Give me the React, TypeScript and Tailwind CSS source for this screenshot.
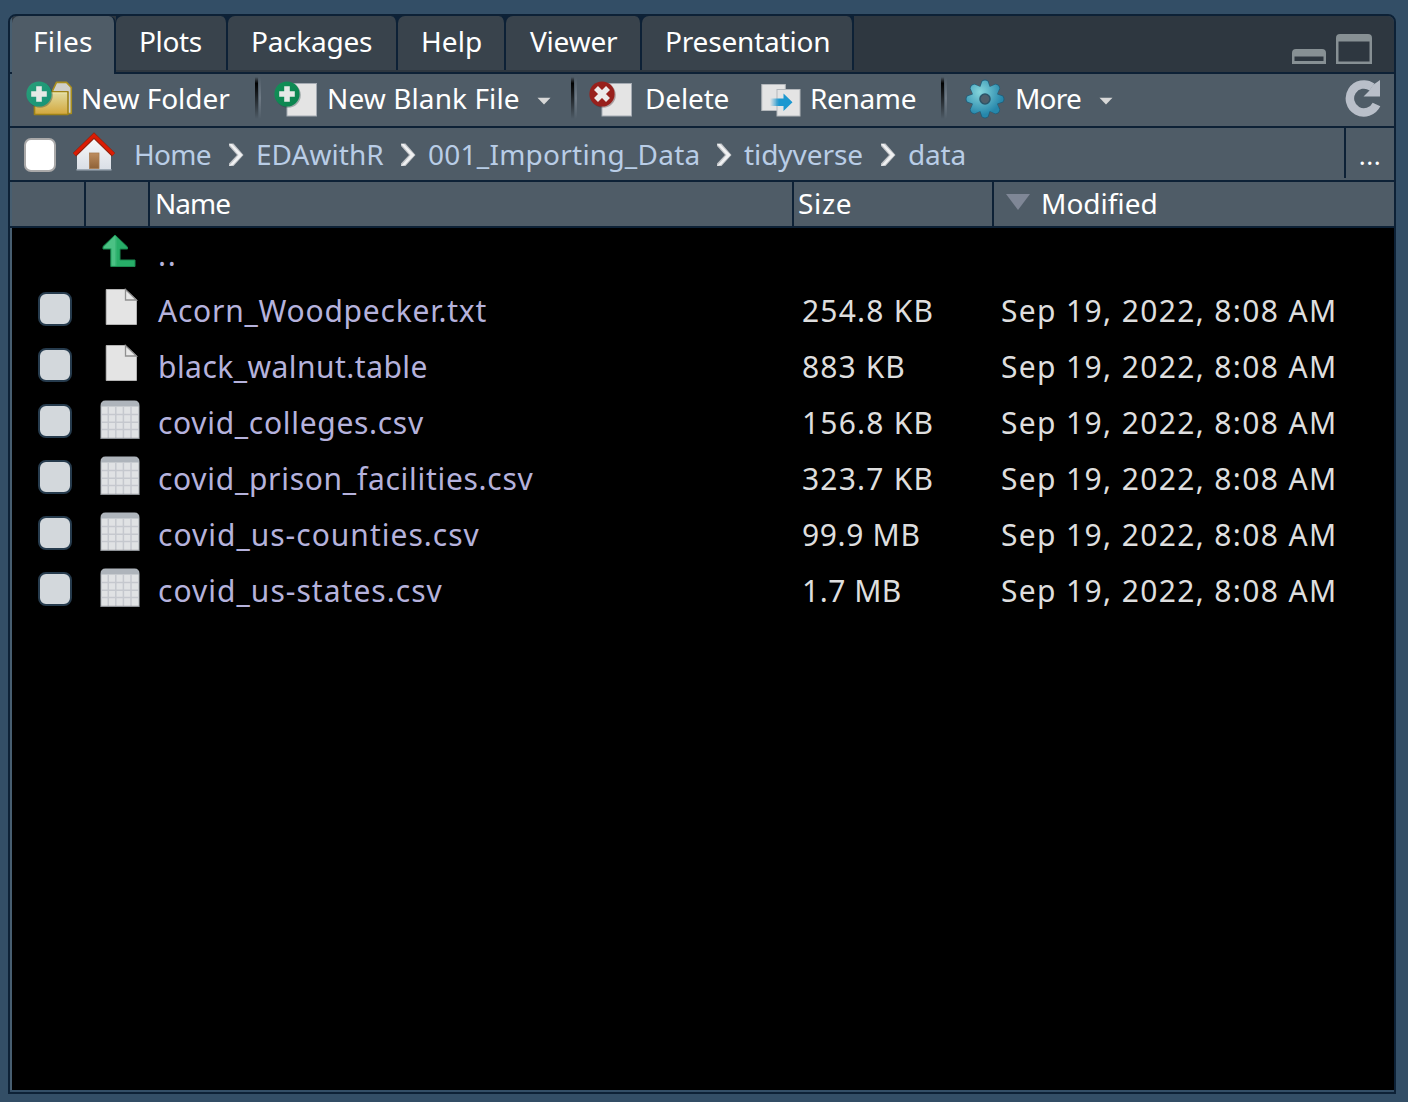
import type { ReactNode } from 'react';
import clsx from 'clsx';

const tabs = [
  { label: 'Plots', box: 'w-[112px] pl-[23px]', text: 'tracking-[-0.35px]' },
  { label: 'Packages', box: 'w-[170px] pl-[23px]', text: 'tracking-[-0.25px]' },
  { label: 'Help', box: 'w-[108px] pl-[23px]', text: 'tracking-[0.08px]' },
  { label: 'Viewer', box: 'w-[136px] pl-[24px]', text: 'tracking-[-0.2px]' },
  { label: 'Presentation', box: 'w-[212px] pl-[23px]', text: 'tracking-[-0.18px]' },
];

const crumbs = [
  { label: 'Home', box: 'w-[122px]', text: 'tracking-[-0.7px]', arrow: true },
  { label: 'EDAwithR', box: 'w-[172px]', text: 'tracking-[0.05px]', arrow: true },
  { label: '001_Importing_Data', box: 'w-[316px]', text: 'tracking-[0.24px]', arrow: true },
  { label: 'tidyverse', box: 'w-[164px]', text: 'tracking-[-0.06px]', arrow: true },
  { label: 'data', box: 'w-[70px]', text: 'tracking-[-0.18px]', arrow: false },
];

const files = [
  { name: 'Acorn_Woodpecker.txt', nameCls: 'tracking-[0.76px]', size: '254.8 KB', sizeCls: 'tracking-[1.2px]', sheet: false },
  { name: 'black_walnut.table', nameCls: 'tracking-[0.46px]', size: '883 KB', sizeCls: 'tracking-[1.1px]', sheet: false },
  { name: 'covid_colleges.csv', nameCls: 'tracking-[0.69px]', size: '156.8 KB', sizeCls: 'tracking-[1.2px]', sheet: true },
  { name: 'covid_prison_facilities.csv', nameCls: 'tracking-[0.71px]', size: '323.7 KB', sizeCls: 'tracking-[1.2px]', sheet: true },
  { name: 'covid_us-counties.csv', nameCls: 'tracking-[1px]', size: '99.9 MB', sizeCls: 'tracking-[0.65px]', sheet: true },
  { name: 'covid_us-states.csv', nameCls: 'tracking-[1.02px]', size: '1.7 MB', sizeCls: 'tracking-[0.5px]', sheet: true },
];

function PlusBadge({ from, to, id }: { from: string; to: string; id: string }) {
  return (
    <g>
      <defs>
        <linearGradient id={id} x1="0" y1="0" x2="1" y2="1">
          <stop offset="0" stopColor={from} />
          <stop offset="1" stopColor={to} />
        </linearGradient>
      </defs>
      <circle cx="14" cy="15" r="12.8" fill="#1c3a3a" opacity=".35" />
      <circle cx="13" cy="14" r="12.6" fill={`url(#${id})`} />
      <path d="M10.2 6.2h5.6v5h5v5.6h-5v5h-5.6v-5h-5v-5.6h5z" fill="#e6e9e6" />
    </g>
  );
}

function NewFolderIcon() {
  return (
    <svg width="48" height="38" viewBox="0 0 48 38" className="shrink-0">
      <defs>
        <linearGradient id="folder" x1="0" y1="0" x2="0" y2="1">
          <stop offset="0" stopColor="#e2dca0" />
          <stop offset="1" stopColor="#d3a73c" />
        </linearGradient>
      </defs>
      <path d="M25 14l5.500-11.600H40.500L45.300 7.500v26H24z" fill="#cfcfca" stroke="#a98e1f" strokeWidth="1.600" strokeLinejoin="round" />
      <path d="M8.500 34.500V16l16-4.200H42v22.700z" fill="url(#folder)" stroke="#9f8318" strokeWidth="1.600" strokeLinejoin="round" />
      <path d="M24 13h17" stroke="#ece4a8" strokeWidth="1" />
      <PlusBadge id="pf" from="#2a9d78" to="#149477" />
    </svg>
  );
}

function NewFileIcon() {
  return (
    <svg width="44" height="38" viewBox="0 0 44 38" className="shrink-0">
      <rect x="13" y="3.500" width="29.500" height="32.500" fill="#e4e4e4" stroke="#a5abb3" />
      <PlusBadge id="pn" from="#148f58" to="#09834e" />
    </svg>
  );
}

function DeleteIcon() {
  return (
    <svg width="44" height="38" viewBox="0 0 44 38" className="shrink-0">
      <rect x="13" y="3.500" width="29.500" height="32.500" fill="#e4e4e4" stroke="#a5abb3" />
      <circle cx="14" cy="15" r="12.800" fill="#401f24" opacity=".35" />
      <circle cx="13" cy="14" r="12.600" fill="#98201c" />
      <path d="M7 8l12 12M19 8L7 20" stroke="#eceaea" strokeWidth="5.600" />
    </svg>
  );
}

function RenameIcon() {
  return (
    <svg width="40" height="34" viewBox="0 0 40 34" className="shrink-0">
      <defs>
        <linearGradient id="arrow" x1="0" y1="0" x2="1" y2="0">
          <stop offset="0" stopColor="#1c98d0" stopOpacity="0" />
          <stop offset=".4" stopColor="#1c98d0" />
        </linearGradient>
      </defs>
      <rect x=".8" y="1.500" width="23.500" height="26" fill="#e4e4e4" stroke="#b4b8bc" />
      <rect x="16" y="6.500" width="23" height="26.500" fill="#e4e4e4" stroke="#b4b8bc" />
      <path d="M9 15.500h13.500v-5l9 8.700-9 8.700v-5H9z" fill="url(#arrow)" />
    </svg>
  );
}

function GearIcon() {
  return (
    <svg width="40" height="40" viewBox="-20 -20 40 40" className="shrink-0">
      <defs>
        <radialGradient id="gear" gradientUnits="userSpaceOnUse" cx="-5" cy="-7" r="23">
          <stop offset="0" stopColor="#86d6dc" />
          <stop offset="1" stopColor="#2687ab" />
        </radialGradient>
      </defs>
      <g stroke="#1f5f7c" strokeWidth="1.600">
        {[0, 45, 90, 135, 180, 225, 270, 315].map((a) => (
          <path key={a} d="M-5-10L-2.800-17.500Q0-19.800 2.800-17.500L5-10z" transform={`rotate(${a})`} />
        ))}
        <circle r="13" />
      </g>
      <g fill="url(#gear)">
        <circle r="13" />
        <path d="M-5-11L-2.800-17.500Q0-19.500 2.800-17.500L5-11V11L2.800 17.500Q0 19.500-2.800 17.500L-5 11z" />
        <path d="M-11-5L-17.500-2.800Q-19.500 0-17.500 2.800L-11 5H11L17.500 2.800Q19.500 0 17.500-2.800L11-5z" />
        <path d="M-11.700-3.900L-14.400-10.400Q-14.200-14-10.400-14.400L-3.900-11.700L11.700 3.900L14.400 10.400Q14.200 14 10.400 14.400L3.900 11.700z" />
        <path d="M11.700-3.900L14.400-10.400Q14.200-14 10.400-14.400L3.900-11.700L-11.700 3.900L-14.400 10.400Q-14.200 14-10.400 14.400L-3.900 11.700z" />
      </g>
      <circle r="5" fill="#4f5f6b" stroke="#2c5468" strokeWidth="1.600" />
    </svg>
  );
}

function HomeIcon() {
  return (
    <svg width="44" height="40" viewBox="0 0 44 40" className="shrink-0">
      <defs>
        <linearGradient id="wall" x1="0" y1="0" x2="0" y2="1">
          <stop offset="0" stopColor="#f8f8f8" />
          <stop offset="1" stopColor="#d9dee6" />
        </linearGradient>
        <linearGradient id="door" x1="0" y1="0" x2="0" y2="1">
          <stop offset="0" stopColor="#bd8c5e" />
          <stop offset="1" stopColor="#8f6238" />
        </linearGradient>
      </defs>
      <path d="M5 38V22L22 6l17 16v16z" fill="url(#wall)" />
      <path d="M4.500 37.700h35" stroke="#9faab6" strokeWidth="1.600" />
      <rect x="17.500" y="21" width="9.500" height="15.500" fill="url(#door)" stroke="#a77b50" strokeWidth=".8" />
      <path d="M2.500 22.800L22 3.700l19.500 19.100" fill="none" stroke="#8f2410" strokeWidth="4.800" />
      <path d="M2.500 22.300L22 3.400l19.500 18.900" fill="none" stroke="#dc1c04" strokeWidth="3.200" />
    </svg>
  );
}

function Chevron() {
  return (
    <svg width="16" height="24" viewBox="0 0 16 24" className="mt-[2px] mr-[12px] shrink-0">
      <path d="M1 .5h4.500L15.500 12 5.500 23H1v-2.500L9 12 1 3z" fill="#c0c3c7" />
      <path d="M1 1h3L14.500 12 5 22 1 23l9.500-11z" fill="#f0f1f2" />
    </svg>
  );
}

function UpIcon() {
  return (
    <svg width="34" height="34" viewBox="0 0 34 34">
      <path d="M13 1L25.500 13v2H18v11h15v6.500H8.800V15H1v-2.500z" fill="#27ae68" stroke="#1b8a50" strokeWidth="1" />
      <path d="M13 1.700L1.800 13v1.300h7.700v17.500H13z" fill="#4bc184" />
      <path d="M13 1.700v30h1.500V3z" fill="#3cb878" />
    </svg>
  );
}

function DocIcon() {
  return (
    <svg width="34" height="38" viewBox="0 0 34 38">
      <path d="M1.200 1.500H20.500L31.500 12v24.500H1.200z" fill="#e4e4e4" stroke="#c4c4c4" strokeWidth=".8" />
      <path d="M20.500 1.500V12h11z" fill="#e8e8e8" stroke="#909090" strokeWidth="1.300" />
    </svg>
  );
}

function SheetIcon() {
  return (
    <svg width="40" height="40" viewBox="0 0 40 40">
      <path d="M.500 39V6q0-5.500 5-5.500h29q5 0 5 5.500v33z" fill="#aeb4bb" />
      <path d="M1.500 38V6.500h37v31.500z" fill="#e0e2e4" />
      <path d="M8.300 6.500v31.500M15.800 6.500v31.500M23.400 6.500v31.500M31 6.500v31.500M1.500 14.500h37M1.500 22.300h37M1.500 29.500h37" stroke="#c5c8ce" strokeWidth="1.500" />
      <path d="M1 38.300h38" stroke="#85898e" strokeWidth="1" />
    </svg>
  );
}

function Caret() {
  return (
    <svg width="14" height="8" viewBox="0 0 14 8" className="mt-[5px] shrink-0">
      <path d="M.500.800h13L7 7.500z" fill="#d8d8d8" />
    </svg>
  );
}

function Separator({ className }: { className: string }) {
  return (
    <div className={clsx('flex h-[42px] shrink-0', className)}>
      <div className="w-[3px] bg-linear-to-b from-transparent via-black via-15% to-transparent" />
      <div className="ml-px w-[2px] bg-linear-to-b from-transparent via-[#6f7a85] to-transparent" />
    </div>
  );
}

function Label({ className, children }: { className?: string; children: ReactNode }) {
  return <span className={clsx('block shrink-0 leading-9 whitespace-pre', className)}>{children}</span>;
}

export default function App() {
  return (
    <div className="h-[1102px] w-[1408px] bg-[#334e66] pt-[14px] pl-2 font-['Noto_Sans',sans-serif] text-[28px] text-white">
      <div className="flex h-[1080px] w-[1388px] flex-col overflow-hidden rounded-t-[8px] border-2 border-[#0d2136] bg-[#334e66] pb-0.5">
        <div className="flex h-14 shrink-0 border-l-2 border-[#475e70] bg-[#2e3740]">
          <div className="z-10 h-[58px] w-[104px] rounded-t-[7px] border-r-2 border-[#0d2136] bg-[#4f5c67] pt-[7px] pl-[21px]">
            <Label className="tracking-[0.31px]">Files</Label>
          </div>
          {tabs.map((t) => (
            <div key={t.label} className="h-[54px] bg-[#0d2136]">
              <div className={clsx('h-full rounded-t-[7px] border-r-2 border-[#0d2136] bg-[#39434c] pt-[7px]', t.box)}>
                <Label className={t.text}>{t.label}</Label>
              </div>
            </div>
          ))}
          <div className="mt-[18px] ml-auto flex items-end self-start pr-[22px]">
            <svg width="34" height="15" viewBox="0 0 34 15" className="mr-[10px]">
              <path d="M0 15V4q0-4 4-4h26q4 0 4 4v11zM2.500 7.500v4.500h29V7.500z" fill="#879094" fillRule="evenodd" />
            </svg>
            <svg width="36" height="30" viewBox="0 0 36 30">
              <path d="M0 30V4q0-4 4-4h28q4 0 4 4v26zM2.500 7.500v20h31v-20z" fill="#879094" fillRule="evenodd" />
            </svg>
          </div>
        </div>

        <div className="h-14 shrink-0 border-y-2 border-[#0d2136]">
          <div className="flex h-[52px] items-center border-l-2 border-[#475e70] bg-[#4f5c67] pb-1">
            <div className="ml-[14px] flex w-[55px] pt-px"><NewFolderIcon /></div>
            <Label className="w-[174px] pb-px tracking-[-0.04px]">New Folder</Label>
            <Separator className="w-[19px]" />
            <div className="flex w-[53px] pt-px"><NewFileIcon /></div>
            <Label className="w-[210px] pb-px tracking-[0.1px]">New Blank File</Label>
            <Caret />
            <Separator className="ml-[20px] w-[18px]" />
            <div className="flex w-[56px] pt-px"><DeleteIcon /></div>
            <Label className="w-[116px] pb-px tracking-[-0.15px]">Delete</Label>
            <div className="flex w-[49px] pt-[3px]"><RenameIcon /></div>
            <Label className="w-[131px] pb-px tracking-[-0.35px]">Rename</Label>
            <Separator className="w-[24px]" />
            <div className="flex w-[50px] pt-px"><GearIcon /></div>
            <Label className="w-[84px] pb-px tracking-[-0.8px]">More</Label>
            <Caret />
            <svg width="36" height="38" viewBox="0 0 36 38" className="mr-[13px] ml-auto">
              <path d="M31.500 25.500A14 14 0 1 1 27 8" fill="none" stroke="#b9bfc9" strokeWidth="8.500" />
              <path d="M35 1v16.500H18.500L24 12l4-6z" fill="#b9bfc9" />
            </svg>
          </div>
        </div>

        <div className="flex h-[52px] shrink-0 items-center border-l-2 border-[#475e70] bg-[#4f5c67]">
          <div className="ml-[12px] h-[34px] w-[32px] translate-y-px rounded-[7px] border-2 border-[#aaa9a9] bg-white" />
          <div className="mr-[18px] ml-[16px] flex pb-[5px]"><HomeIcon /></div>
          {crumbs.map((c) => (
            <div key={c.label} className={clsx('flex shrink-0 items-center justify-between text-[#b9cde6]', c.box)}>
              <Label className={clsx('pb-px', c.text)}>{c.label}</Label>
              {c.arrow && <Chevron />}
            </div>
          ))}
          <div className="mb-[2px] ml-auto flex h-[50px] w-[50px] justify-center border-l-2 border-[#0d2136] pt-[9px]">
            <Label className="text-[26px] tracking-[0.5px]">...</Label>
          </div>
        </div>

        <div className="h-12 shrink-0 border-y-2 border-[#0d2136]">
          <div className="grid h-11 grid-cols-[74px_64px_644px_200px_1fr] border-l-2 border-[#475e70] bg-[#4f5c67]">
            <div className="border-r-2 border-[#0d2136]" />
            <div className="border-r-2 border-[#0d2136]" />
            <div className="border-r-2 border-[#0d2136] pt-[3px] pl-[5px]">
              <Label className="tracking-[-1px]">Name</Label>
            </div>
            <div className="border-r-2 border-[#0d2136] pt-[3px] pl-[4px]">
              <Label className="tracking-[0.7px]">Size</Label>
            </div>
            <div className="flex pt-[3px] pl-[12px]">
              <svg width="24" height="16" viewBox="0 0 24 16" className="mt-[9px] mr-[11px]">
                <path d="M0 0h24L12 16z" fill="#7f8796" />
              </svg>
              <Label>Modified</Label>
            </div>
          </div>
        </div>

        <div className="grow border-l-2 border-[#475e70] bg-black text-[30px]">
          <div className="flex h-14">
            <div className="mt-[6px] ml-[90px] w-[56px]"><UpIcon /></div>
            <Label className="mt-[9px] tracking-[1.600px] text-[#b5b2dc]">..</Label>
          </div>
          {files.map((f) => (
            <div key={f.name} className="grid h-14 grid-cols-[88px_58px_644px_199px_1fr]">
              <div className="mt-2 ml-[26px] h-[34px] w-[34px] rounded-[8px] border-2 border-[#263b4d] bg-[#d3d8dc]" />
              <div className={f.sheet ? 'mt-1' : 'mt-1 ml-[5px]'}>{f.sheet ? <SheetIcon /> : <DocIcon />}</div>
              <Label className={clsx('mt-[9px] text-[#b5b2dc]', f.nameCls)}>{f.name}</Label>
              <Label className={clsx('mt-[9px] text-[#dedede]', f.sizeCls)}>{f.size}</Label>
              <Label className="mt-[9px] tracking-[1.360px] text-[#dedede]">Sep 19, 2022, 8:08 AM</Label>
            </div>
          ))}
        </div>
      </div>
    </div>
  );
}
